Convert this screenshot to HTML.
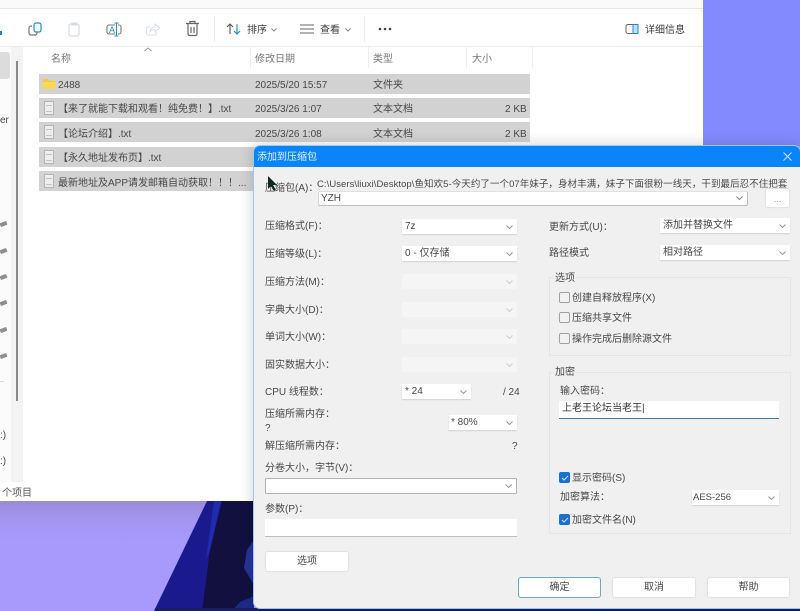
<!DOCTYPE html>
<html><head><meta charset="utf-8">
<style>
html,body{margin:0;padding:0}
body{width:800px;height:611px;position:relative;overflow:hidden;background:#a899fd;font-family:"Liberation Sans","Noto Sans CJK SC",sans-serif;font-size:10px;color:#3c3c3c}
.a{position:absolute}
.t{position:absolute;white-space:nowrap;line-height:14px;color:#484848;margin-top:4px}
.row{position:absolute;left:39px;width:491px;height:20px;background:#d2d2d2}
.doc{position:absolute;left:5px;top:3px;width:8px;height:12px;border:1px solid #b4b4b4;background:#ededed}
.doc:before{content:"";position:absolute;left:1px;right:1px;top:3px;height:5px;border-top:1px solid #c4c4c4;border-bottom:1px solid #c4c4c4}
.sel{position:absolute;height:15px;background:#fff;box-shadow:0 1px 1px #d4d4d4;font-size:10px;line-height:15px;color:#484848;padding-left:3px;box-sizing:border-box;white-space:nowrap}
.sel.dis{background:#f5f5f5;box-shadow:none}
.sel svg{position:absolute;right:4px;top:6px}
.btn{position:absolute;height:19px;background:#fff;border-radius:2px;box-shadow:0 0 1px 1px #e0e0e0;text-align:center;line-height:19px;color:#484848;box-sizing:border-box}
.cb{position:absolute;width:9px;height:9px;border:1px solid #a0a0a0;border-radius:2px;background:#f2f2f2}
.cb.on{background:#1a6fd0;border-color:#1a6fd0}
.cb.on svg{position:absolute;left:1px;top:2px}
.grp{position:absolute;border:1px solid #e5e5e5;box-sizing:border-box}
.pin{position:absolute;left:0;width:7px;height:4px;background:#8a8f96;transform:rotate(-20deg);border-radius:1px}
</style></head><body>

<!-- desktop -->
<div class="a" style="left:703px;top:0;width:97px;height:146px;background:#828bfd"></div>
<div class="a" style="left:0;top:501px;width:254px;height:110px;background:linear-gradient(#9a8ad8,#a495f0 18px,#a899fd 40px)"></div>
<svg class="a" style="left:150px;top:500px" width="110" height="111" viewBox="0 0 110 111">
<polygon points="57,1 104,1 104,111 4,111" fill="#1a1a8e"/>
<polygon points="72,1 104,1 104,111 52,111 60,50" fill="#12103f"/>
<polygon points="64,1 71,1 60,50 56,60" fill="#1f2cae"/>
<polygon points="104,40 104,85 94,68 97,50" fill="#26349e"/>
<polygon points="90,102 104,96 104,111 82,111" fill="#1e2a8a"/>
</svg>
<div class="a" style="left:155px;top:608px;width:645px;height:3px;background:#1a1f60"></div>

<!-- explorer -->
<div class="a" style="left:0;top:0;width:703px;height:501px;background:#fff"></div>
<div class="a" style="left:0;top:0;width:703px;height:8px;background:#fafafa;border-bottom:1px solid #e8e8e8"></div>
<div class="a" style="left:0;top:46px;width:703px;height:1px;background:#ececec"></div>
<div class="a" style="left:0;top:47px;width:23px;height:435px;background:#fbfbfb"></div>
<div class="a" style="left:0;top:52px;width:10px;height:27px;background:#dcdcdc;border-radius:0 3px 3px 0"></div>
<div class="a" style="left:11px;top:47px;width:12px;height:435px;background:#f3f3f3"></div>
<div class="a" style="left:16px;top:61px;width:2px;height:340px;background:#8a8a8a"></div>
<div class="a" style="left:0;top:31px;width:2px;height:4px;background:#2b7fc9"></div>
<div class="t" style="left:0;top:110px">er</div>
<div class="pin" style="top:222px"></div><div class="pin" style="top:249px"></div><div class="pin" style="top:275px"></div><div class="pin" style="top:301px"></div><div class="pin" style="top:328px"></div><div class="pin" style="top:354px"></div>
<div class="a" style="left:0;top:381px;width:4px;height:1px;background:#ddd"></div>
<div class="t" style="left:0;top:425px">:)</div>
<div class="t" style="left:0;top:451px">:)</div>
<div class="t" style="left:2px;top:483px;color:#5a5a5a">个项目</div>

<!-- toolbar icons -->
<svg class="a" style="left:0;top:12px" width="210" height="34" viewBox="0 0 210 34" fill="none">
<rect x="34" y="11" width="7" height="9" rx="2" stroke="#1f8ad0" stroke-width="1.2"/>
<path d="M32 14h-1a2 2 0 0 0-2 2v5a2 2 0 0 0 2 2h4a2 2 0 0 0 2-2v-1" stroke="#777" stroke-width="1.200"/>
<rect x="69" y="12" width="10" height="12" rx="2" stroke="#d4dce0" stroke-width="1.200"/>
<rect x="72" y="11" width="5" height="2" stroke="#d4dce0"/>
<path d="M115 13h-6a2 2 0 0 0-2 2v5a2 2 0 0 0 2 2h6M118 13h1a2 2 0 0 1 2 2v5a2 2 0 0 1-2 2h-1" stroke="#777" stroke-width="1.100"/>
<path d="M116.500 11v13M114.500 11h4M114.500 24h4" stroke="#1f8ad0" stroke-width="1"/>
<text x="109" y="21" font-size="9" fill="#2f7fb8" font-family="Liberation Sans">A</text>
<path d="M150 15h-2a1.500 1.500 0 0 0-1.500 1.500v5a1.500 1.500 0 0 0 1.500 1.500h7a1.500 1.500 0 0 0 1.500-1.500v-1" stroke="#dde2e6" stroke-width="1.100"/>
<path d="M150 20c0-3 2-5 5-5v-3l4.500 4-4.500 4v-2.500c-2 0-4 .5-5 2.500z" stroke="#d2e4ee" stroke-width="1"/>
<path d="M186 11.500h13M188 12v10a1.500 1.500 0 0 0 1.500 1.500h6a1.500 1.500 0 0 0 1.500-1.500V12M190 11v-1.500h5V11M191 15v6M194 15v6" stroke="#666" stroke-width="1.200"/>
</svg>
<div class="a" style="left:214px;top:16px;width:1px;height:26px;background:#ececec"></div>
<svg class="a" style="left:226px;top:22px" width="16" height="14" viewBox="0 0 16 14" fill="none">
<path d="M4 12V2M1 5l3-3 3 3" stroke="#555" stroke-width="1.100"/><path d="M11 2v10M8 9l3 3 3-3" stroke="#1f8ad0" stroke-width="1.100"/>
</svg>
<div class="t" style="left:247px;top:20px;color:#3c3c3c">排序</div>
<svg class="a" style="left:271px;top:28px" width="6" height="4"><path d="M0.500 0.500l2.500 2.500 2.500-2.500" stroke="#888" fill="none"/></svg>
<svg class="a" style="left:300px;top:24px" width="15" height="10"><path d="M0 1h14M0 5h14M0 9h14" stroke="#666" stroke-width="1.100"/></svg>
<div class="t" style="left:320px;top:20px;color:#3c3c3c">查看</div>
<svg class="a" style="left:345px;top:28px" width="6" height="4"><path d="M0.500 0.500l2.500 2.500 2.500-2.500" stroke="#888" fill="none"/></svg>
<div class="a" style="left:364px;top:16px;width:1px;height:26px;background:#ececec"></div>
<svg class="a" style="left:378px;top:27px" width="14" height="4"><circle cx="2" cy="2" r="1.300" fill="#444"/><circle cx="7" cy="2" r="1.300" fill="#444"/><circle cx="12" cy="2" r="1.300" fill="#444"/></svg>
<svg class="a" style="left:625px;top:23px" width="15" height="12" fill="none"><rect x="1" y="1.500" width="12" height="9" rx="2" stroke="#666" stroke-width="1"/><rect x="8" y="1.500" width="5" height="9" fill="#bfe0f5" stroke="#1f8ad0" stroke-width="1"/></svg>
<div class="t" style="left:645px;top:20px;color:#3c3c3c">详细信息</div>

<!-- header -->
<div class="t" style="left:51px;top:49px;color:#777">名称</div>
<svg class="a" style="left:144px;top:47px" width="8" height="5"><path d="M0.500 4l3.500-3 3.500 3" stroke="#999" fill="none"/></svg>
<div class="a" style="left:250px;top:47px;width:1px;height:21px;background:#efefef"></div>
<div class="t" style="left:255px;top:49px;color:#777">修改日期</div>
<div class="a" style="left:368px;top:47px;width:1px;height:21px;background:#efefef"></div>
<div class="t" style="left:373px;top:49px;color:#777">类型</div>
<div class="a" style="left:466px;top:47px;width:1px;height:21px;background:#efefef"></div>
<div class="t" style="left:472px;top:49px;color:#777">大小</div>
<div class="a" style="left:532px;top:47px;width:1px;height:21px;background:#efefef"></div>

<!-- rows -->
<div class="row" style="top:74px"><svg class="a" style="left:4px;top:4px" width="13" height="12"><path d="M0 2a1 1 0 0 1 1-1h4l2 2h5a1 1 0 0 1 1 1v7H0z" fill="#f6c93a"/><rect y="4" width="13" height="7" fill="#fbd85a"/></svg></div>
<div class="t" style="left:58px;top:75px">2488</div>
<div class="t" style="left:255px;top:75px">2025/5/20 15:57</div>
<div class="t" style="left:373px;top:75px">文件夹</div>

<div class="row" style="top:98px"><div class="doc"></div></div>
<div class="t" style="left:58px;top:99px">【来了就能下载和观看！纯免费！】.txt</div>
<div class="t" style="left:255px;top:99px">2025/3/26 1:07</div>
<div class="t" style="left:373px;top:99px">文本文档</div>
<div class="t" style="left:505px;top:99px">2 KB</div>

<div class="row" style="top:122px"><div class="doc"></div></div>
<div class="t" style="left:58px;top:124px">【论坛介绍】.txt</div>
<div class="t" style="left:255px;top:124px">2025/3/26 1:08</div>
<div class="t" style="left:373px;top:124px">文本文档</div>
<div class="t" style="left:505px;top:124px">2 KB</div>

<div class="row" style="top:147px"><div class="doc"></div></div>
<div class="t" style="left:58px;top:148px">【永久地址发布页】.txt</div>

<div class="row" style="top:171px"><div class="doc"></div></div>
<div class="t" style="left:58px;top:173px">最新地址及APP请发邮箱自动获取！！！...</div>

<!-- dialog -->
<div class="a" style="left:254px;top:146px;width:546px;height:462px;background:#f0f0f0;border-radius:6px 6px 0 6px;box-shadow:0 0 0 1px #9cc8ee,0 0 14px 2px rgba(0,0,0,.16)"></div>
<div class="a" style="left:254px;top:146px;width:546px;height:21px;background:#0a84fb;border-radius:6px 6px 0 0"></div>
<div class="t" style="left:257px;top:147px;color:#e6f2ff">添加到压缩包</div>
<svg class="a" style="left:783px;top:152px" width="9" height="9"><path d="M0.500 0.500l8 8M8.500 0.500l-8 8" stroke="#cfe8ff" stroke-width="1"/></svg>

<div class="t" style="left:265px;top:178px">压缩包(A)：</div>
<svg class="a" style="left:267px;top:175px" width="12" height="18"><path d="M1 1l0 13 3-3 3 5 2-1-3-5 4 0z" fill="#0c2a20"/></svg>
<div class="t" style="left:317px;top:174px;font-size:9.500px;width:472px;overflow:hidden;letter-spacing:.06px">C:\Users\liuxi\Desktop\鱼知欢5-今天约了一个07年妹子，身材丰满，妹子下面很粉一线天，干到最后忍不住把套</div>
<div class="a" style="left:318px;top:191px;width:430px;height:15px;background:#fff;border:1px solid #bdbdbd;border-top-color:#e0e0e0;border-left-color:#d8d8d8;box-sizing:border-box;padding-left:2px;line-height:14px;border-radius:2px;color:#484848">YZH<svg class="a" style="right:4px;top:4px" width="7" height="4"><path d="M0.500 0.500l3 3 3-3" stroke="#888" fill="none"/></svg></div>
<div class="btn" style="left:766px;top:189px;width:23px;height:18px;line-height:20px;font-size:9px;color:#999">...</div>

<div class="t" style="left:265px;top:216px">压缩格式(F)：</div>
<div class="sel" style="left:402px;top:219px;width:115px">7z<svg width="7" height="4"><path d="M0.500 0.500l3 3 3-3" stroke="#999" fill="none"/></svg></div>
<div class="t" style="left:265px;top:244px">压缩等级(L)：</div>
<div class="sel" style="left:402px;top:246px;width:115px">0 - 仅存储<svg width="7" height="4"><path d="M0.500 0.500l3 3 3-3" stroke="#999" fill="none"/></svg></div>
<div class="t" style="left:265px;top:272px">压缩方法(M)：</div>
<div class="sel dis" style="left:402px;top:274px;width:115px"><svg width="7" height="4"><path d="M0.500 0.500l3 3 3-3" stroke="#ccc" fill="none"/></svg></div>
<div class="t" style="left:265px;top:300px">字典大小(D)：</div>
<div class="sel dis" style="left:402px;top:302px;width:115px"><svg width="7" height="4"><path d="M0.500 0.500l3 3 3-3" stroke="#ccc" fill="none"/></svg></div>
<div class="t" style="left:265px;top:327px">单词大小(W)：</div>
<div class="sel dis" style="left:402px;top:329px;width:115px"><svg width="7" height="4"><path d="M0.500 0.500l3 3 3-3" stroke="#ccc" fill="none"/></svg></div>
<div class="t" style="left:265px;top:355px">固实数据大小：</div>
<div class="sel dis" style="left:402px;top:357px;width:115px"><svg width="7" height="4"><path d="M0.500 0.500l3 3 3-3" stroke="#ccc" fill="none"/></svg></div>

<div class="t" style="left:265px;top:382px">CPU 线程数：</div>
<div class="sel" style="left:402px;top:384px;width:69px">* 24<svg width="7" height="4"><path d="M0.500 0.500l3 3 3-3" stroke="#999" fill="none"/></svg></div>
<div class="t" style="left:503px;top:382px">/ 24</div>
<div class="t" style="left:265px;top:404px">压缩所需内存：</div>
<div class="t" style="left:265px;top:418px">?</div>
<div class="sel" style="left:449px;top:415px;width:68px;padding-left:2px">* 80%<svg width="7" height="4"><path d="M0.500 0.500l3 3 3-3" stroke="#999" fill="none"/></svg></div>
<div class="t" style="left:265px;top:436px">解压缩所需内存：</div>
<div class="t" style="left:512px;top:436px">?</div>
<div class="t" style="left:265px;top:458px">分卷大小，字节(V)：</div>
<div class="a" style="left:265px;top:478px;width:252px;height:16px;background:#fff;border:1px solid #b4b4b4;box-sizing:border-box;border-radius:1px"><svg class="a" style="right:4px;top:5px" width="7" height="4"><path d="M0.500 0.500l3 3 3-3" stroke="#999" fill="none"/></svg></div>
<div class="t" style="left:265px;top:499px">参数(P)：</div>
<div class="a" style="left:265px;top:519px;width:252px;height:18px;background:#fff;border-bottom:1px solid #bdbdbd;box-sizing:border-box"></div>
<div class="btn" style="left:266px;top:552px;width:82px">选项</div>

<!-- right column -->
<div class="t" style="left:549px;top:217px">更新方式(U)：</div>
<div class="sel" style="left:660px;top:218px;width:130px">添加并替换文件<svg width="7" height="4"><path d="M0.500 0.500l3 3 3-3" stroke="#999" fill="none"/></svg></div>
<div class="t" style="left:549px;top:243px">路径模式</div>
<div class="sel" style="left:660px;top:245px;width:130px">相对路径<svg width="7" height="4"><path d="M0.500 0.500l3 3 3-3" stroke="#999" fill="none"/></svg></div>

<div class="grp" style="left:549px;top:277px;width:242px;height:79px"></div>
<div class="t" style="left:554px;top:268px;background:#f0f0f0;padding:0 1px">选项</div>
<div class="cb" style="left:559px;top:292px"></div><div class="t" style="left:572px;top:288px">创建自释放程序(X)</div>
<div class="cb" style="left:559px;top:312px"></div><div class="t" style="left:572px;top:308px">压缩共享文件</div>
<div class="cb" style="left:559px;top:333px"></div><div class="t" style="left:572px;top:329px">操作完成后删除源文件</div>

<div class="grp" style="left:549px;top:372px;width:242px;height:162px"></div>
<div class="t" style="left:554px;top:362px;background:#f0f0f0;padding:0 1px">加密</div>
<div class="t" style="left:560px;top:381px">输入密码：</div>
<div class="a" style="left:559px;top:401px;width:220px;height:18px;background:#fff;border-bottom:1px solid #2f7fb8;box-sizing:border-box;font-size:10px;line-height:16px;padding-left:3px;color:#333">上老王论坛当老王|</div>
<div class="cb on" style="left:559px;top:472px"><svg width="8" height="6" style="display:block"><path d="M1 3l2 2 4-4" stroke="#cfe6ff" fill="none"/></svg></div>
<div class="t" style="left:572px;top:468px">显示密码(S)</div>
<div class="t" style="left:560px;top:487px">加密算法：</div>
<div class="sel" style="left:692px;top:490px;width:87px;padding-left:1px;font-size:9.500px">AES-256<svg width="7" height="4"><path d="M0.500 0.500l3 3 3-3" stroke="#999" fill="none"/></svg></div>
<div class="cb on" style="left:559px;top:514px"><svg width="8" height="6" style="display:block"><path d="M1 3l2 2 4-4" stroke="#cfe6ff" fill="none"/></svg></div>
<div class="t" style="left:572px;top:510px">加密文件名(N)</div>

<div class="btn" style="left:519px;top:578px;width:81px;box-shadow:0 0 0 1px #6fa6c4">确定</div>
<div class="btn" style="left:613px;top:578px;width:82px">取消</div>
<div class="btn" style="left:708px;top:578px;width:81px">帮助</div>
</body></html>
